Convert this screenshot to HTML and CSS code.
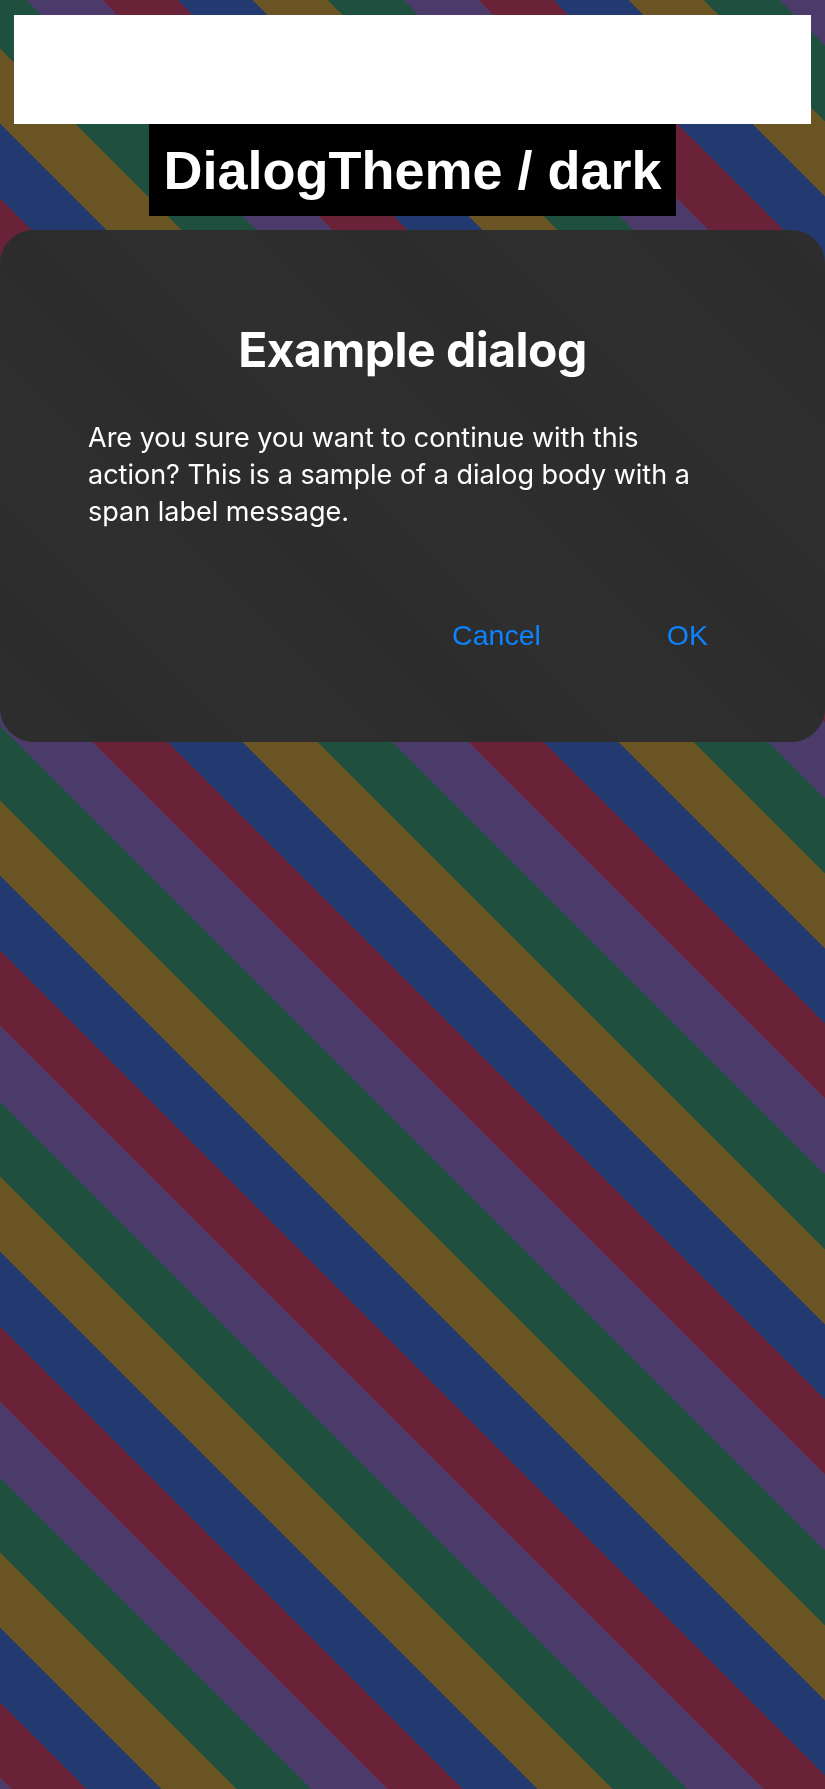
FILE: index.html
```html
<!DOCTYPE html>
<html lang="en">
<head>
<meta charset="utf-8">
<title>DialogTheme / dark</title>
<link rel="stylesheet" href="styles.css">
</head>
<body>
<div class="page">
  <div class="topbox"></div>
  <div class="label-wrap">
    <h1 class="label">DialogTheme / dark</h1>
  </div>
  <div class="dialog">
    <h2 class="dialog-title">Example dialog</h2>
    <p class="dialog-body">Are you sure you want to continue with this action? This is a sample of a dialog body with a span label message.</p>
    <div class="dialog-actions">
      <button class="dialog-btn">Cancel</button>
      <button class="dialog-btn">OK</button>
    </div>
  </div>
</div>
</body>
</html>
```

FILE: styles.css
```css
html, body {
  margin: 0;
  padding: 0;
}

body {
  background: #1f4f3f;
}

.page {
  width: 825px;
  height: 1789px;
  overflow: hidden;
  box-sizing: border-box;
  padding-top: 15px;
  background: repeating-linear-gradient(45deg,
    #4b3a6a 0 7.8px,
    #6a2238 7.8px 61px,
    #223a6f 61px 114.1px,
    #6b5424 114.1px 167.3px,
    #1f4f3f 167.3px 220.5px,
    #4b3a6a 220.5px 265.9px);
}

.topbox {
  margin: 0 14px;
  height: 109px;
  background: #ffffff;
}

.label-wrap {
  display: flex;
  justify-content: center;
}

.label {
  margin: 0;
  background: #000000;
  color: #ffffff;
  font-family: "Liberation Sans", Arial, sans-serif;
  font-weight: 700;
  font-size: 54px;
  line-height: 61px;
  padding: 16px 14px 15px;
}

.dialog {
  margin-top: 14px;
  border-radius: 34px;
  background: rgba(44, 44, 44, 0.93);
  backdrop-filter: grayscale(1);
  -webkit-backdrop-filter: grayscale(1);
  padding: 91px 88px 91px;
  color: #ffffff;
  font-family: Inter, "Noto Sans", sans-serif;
}

.dialog-title {
  margin: 0;
  text-align: center;
  font-size: 48px;
  font-weight: 700;
  line-height: 58px;
  letter-spacing: -0.5px;
}

.dialog-body {
  margin: 40px 0 0;
  max-width: 625px;
  font-size: 27px;
  font-weight: 400;
  line-height: 37px;
}

.dialog-actions {
  margin-top: 89px;
  display: flex;
  justify-content: flex-end;
  gap: 68px;
}

.dialog-btn {
  background: none;
  border: 0;
  margin: 0;
  padding: 0 29px;
  color: #0a84ff;
  font-family: "Liberation Sans", Arial, sans-serif;
  font-size: 28.5px;
  line-height: 32px;
  cursor: pointer;
}
```
